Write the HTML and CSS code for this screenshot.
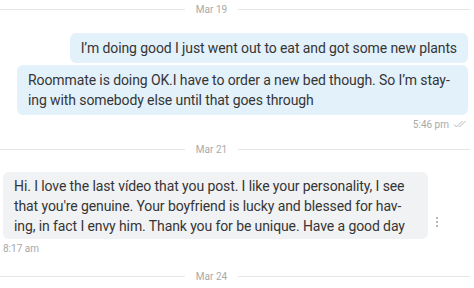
FILE: index.html
```html
<!DOCTYPE html>
<html lang="en">
<head>
    <meta charset="UTF-8">
    <meta name="viewport" content="width=device-width, initial-scale=1.0">
    <title>Chat</title>
    <link rel="stylesheet" href="styles.css">
</head>
<body>

<div class="chat">
    <div class="day"><span class="day-line short"></span><span class="day-label">Mar 19</span><span class="day-line"></span></div>

    <div class="out">
        <div class="bubble sent">I’m doing good I just went out to eat and got some new plants</div>
        <div class="bubble sent wide">Roommate is doing OK.I have to order a new bed though. So I’m stay-<br>ing with somebody else until that goes through</div>
        <div class="meta right">5:46 pm
            <svg class="ticks" width="15" height="8" viewBox="0 0 15 8"><path d="M1 4.5 L3.5 7 L9.5 1 M6 6.5 L6.5 7 L12.5 1" fill="none" stroke="#b5b9bd" stroke-width="1"/></svg>
        </div>
    </div>

    <div class="day"><span class="day-line short"></span><span class="day-label">Mar 21</span><span class="day-line"></span></div>

    <div class="in">
        <div class="in-row">
            <div class="bubble received">Hi. I love the last vídeo that you post. I like your personality, I see<br>that you're genuine. Your boyfriend is lucky and blessed for hav-<br>ing, in fact I envy him. Thank you for be unique. Have a good day</div>
            <div class="more"><span></span><span></span><span></span></div>
        </div>
        <div class="meta">8:17 am</div>
    </div>

    <div class="day"><span class="day-line short"></span><span class="day-label">Mar 24</span><span class="day-line"></span></div>
</div>

</body>
</html>
```

FILE: styles.css
```css
body { margin: 0; background: #fff; font-family: Roboto, "Noto Sans", sans-serif; color: #353535; }
.chat { width: 474px; padding-top: 2px; }

.day { display: flex; align-items: center; height: 14px; }
.day-line { flex: 1; height: 1px; background: #e6e6e6; margin-right: 4px; }
.day-line.short { flex: none; width: 185px; margin-right: 0; }
.day-label { font-size: 10px; color: #a9a9a9; width: 53px; text-align: center; }

.out { display: flex; flex-direction: column; align-items: flex-end; padding: 17px 6px 0 0; gap: 2px; }
.bubble { font-size: 14px; letter-spacing: -0.1px; line-height: 20px; padding: 5px 11px; border-radius: 6px; white-space: nowrap; }
.sent { background: #e3f1fb; }
.sent.wide { width: 429px; }
.meta { font-size: 10px; color: #a9a9a9; display: flex; align-items: center; gap: 4px; height: 14px; margin: 0 0 11px; }
.ticks { display: block; }

.in { padding: 16px 0 0 3px; }
.in-row { display: flex; align-items: flex-end; }
.received { background: #f1f2f4; padding: 4px 11px 3px; width: 403px; }
.more { display: flex; flex-direction: column; gap: 2px; margin: 0 0 12px 8px; }
.more span { width: 2px; height: 2px; background: #9aa0a6; border-radius: 1px; }
.in .meta { margin: 2px 0 14px; }
```
